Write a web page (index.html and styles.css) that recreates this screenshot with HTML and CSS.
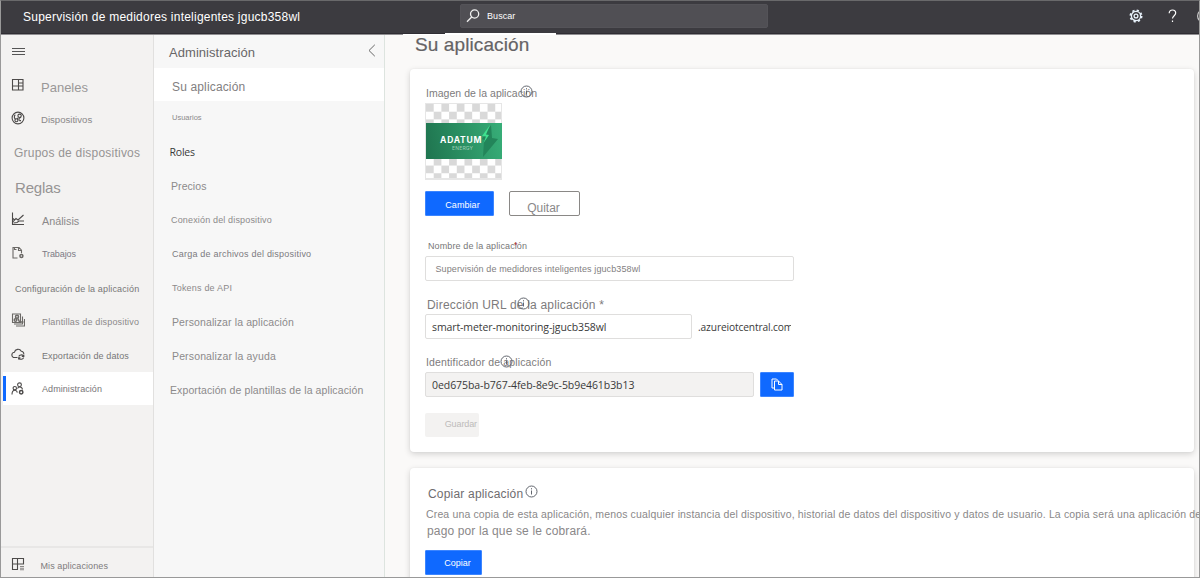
FILE: index.html
```html
<!DOCTYPE html>
<html lang="es">
<head>
<meta charset="utf-8">
<title>Su aplicación</title>
<link rel="stylesheet" href="styles.css">
</head>
<body>
<div class="app">
  <header class="topbar">
    <div class="brand">Supervisión de medidores inteligentes jgucb358wl</div>
    <div class="search">
      <svg class="search-icon" width="14" height="14" viewBox="0 0 14 14"><circle cx="8.6" cy="5" r="4.1"/><path d="M5.7 8 1 12.8"/></svg>
      <span>Buscar</span>
    </div>
    <div class="tools">
      <svg class="gear" width="14" height="14" viewBox="0 0 14 14"><circle cx="7" cy="7" r="5.6" class="teeth"/><circle cx="7" cy="7" r="4.6"/><circle cx="7" cy="7" r="1.9"/></svg>
      <svg class="help" width="9" height="14" viewBox="0 0 9 14"><path d="M1.2 4.2C1.2 2.2 2.5 1 4.5 1s3.2 1.2 3.2 3c0 2.6-3.2 2.8-3.2 5.6M4.5 11.6v1.4"/></svg>
      <svg class="face" width="14" height="14" viewBox="0 0 14 14"><circle cx="7" cy="7" r="6.4"/></svg>
    </div>
  </header>

  <div class="body">
    <nav class="sidebar">
      <div class="burger"><svg width="13" height="8" viewBox="0 0 13 8"><path d="M0 .5h13M0 3.5h13M0 6.5h13"/></svg></div>
      <a class="item"><svg class="ico" viewBox="0 0 14 14"><path d="M1.500 1.500h10.500v10.500h-10.500zM7.500 1.500v10.500M1.500 8h10.500M7.500 5h4.500"/></svg><span class="paneles">Paneles</span></a>
      <a class="item"><svg class="ico" viewBox="0 0 14 14"><circle cx="7" cy="7" r="5.9"/><circle cx="8.6" cy="4.8" r="1.7"/><circle cx="5.4" cy="9.3" r="1.5"/><path d="M7 6.8 6 8.2M10 6.4c-2 .2-2.6 1.4-1.6 3.2M4.2 3.6c-1.400 2-1 4 .4 4.600M8.400 9.600h1.600"/></svg><span class="dispositivos">Dispositivos</span></a>
      <a class="item bare"><span class="grupos">Grupos de dispositivos</span></a>
      <a class="item bare"><span class="reglas">Reglas</span></a>
      <a class="item"><svg class="ico" viewBox="0 0 14 14"><path d="M1.500 .5v12h11.500M2 9.500 5 6.500 7 8 12.500 3M2 6.500 3.500 8M2.500 11 6 10.500 8 9h5"/></svg><span class="analisis">Análisis</span></a>
      <a class="item"><svg class="ico soft" viewBox="0 0 14 14"><path d="M6.500 12H2V1.500h6l2.500 2.700v3M7.500 1.500v3h3M3.500 1.500v2h2"/><circle cx="10.400" cy="10" r="1.500" class="thick"/></svg><span class="trabajos">Trabajos</span></a>
      <a class="item bare"><span class="config">Configuración de la aplicación</span></a>
      <a class="item"><svg class="ico soft" viewBox="0 0 14 14"><path d="M1.500 1h8v8.500h-8zM3 11h8.500V3.500M5 13h8.500V6" /><circle cx="6" cy="3.800" r="1.500" class="thick"/><circle cx="4.500" cy="7" r="1.300" class="thick"/><path d="M7 5.500 8.500 9h4" class="thick"/></svg><span class="plantillas">Plantillas de dispositivo</span></a>
      <a class="item"><svg class="ico" viewBox="0 0 14 14"><path d="M6.500 10.500H3.500A2.600 2.600 0 0 1 3.400 5.300 3.700 3.700 0 0 1 10.300 4.300 2.600 2.600 0 0 1 12.800 7"/><path d="M7.800 9.500a2.500 2 0 0 1 4.600-.6M12.800 7.500V9.500H10.800M12.600 10.500a2.500 2 0 0 1-4.600.8M7.600 12.500v-1.800h1.800"/></svg><span class="exportar">Exportación de datos</span></a>
      <a class="item active"><svg class="ico" viewBox="0 0 14 14"><circle cx="8.500" cy="2.800" r="1.900"/><circle cx="3.800" cy="6.200" r="1.700"/><path d="M1 12.500C1 9.500 2 8.300 3.800 8.300S6 9 6.400 10.500M6.500 6.500c.5-1 1.200-1.500 2.200-1.500 1.500 0 2.600 1 2.800 2.500"/><circle cx="10.200" cy="10.200" r="1.700" class="thick"/></svg><span class="admin">Administración</span></a>
      <div class="foot"><svg class="ico" viewBox="0 0 14 14"><path d="M7 12.500H1.500V1.500h11v6M1.500 7h11M6.500 1.500v11"/><path class="soft-line" d="M9 9.500h4M9 11.200h4M9 12.800h4"/></svg><span class="mis">Mis aplicaciones</span></div>
    </nav>

    <nav class="subnav">
      <div class="subhead"><span>Administración</span><svg width="8" height="13" viewBox="0 0 8 13"><path d="M6.800.8 1 6.500l5.800 5.700"/></svg></div>
      <a class="sub current">Su aplicación</a>
      <a class="sub usuarios">Usuarios</a>
      <a class="sub roles">Roles</a>
      <a class="sub precios">Precios</a>
      <a class="sub conexion">Conexión del dispositivo</a>
      <a class="sub carga">Carga de archivos del dispositivo</a>
      <a class="sub tokens">Tokens de API</a>
      <a class="sub perso">Personalizar la aplicación</a>
      <a class="sub ayuda">Personalizar la ayuda</a>
      <a class="sub expo">Exportación de plantillas de la aplicación</a>
    </nav>

    <main class="content">
      <h1>Su aplicación</h1>
      <section class="card settings">
        <div class="label imagen">Imagen de la aplicación
          <svg class="info" viewBox="0 0 13 13"><circle cx="6.500" cy="6.500" r="5.500"/><path d="M6.500 5.500v4M6.500 3.200v1.200"/></svg>
        </div>
        <div class="thumb"><div class="logo">
          <svg class="bolt" viewBox="0 0 18 34"><path class="b1" d="M10 1 1 15l2 1-1 17L17 15l-6-1z"/><path class="b2" d="M9 1 1 12l4 .5L2.500 19 8 11l-3-.5z"/></svg>
          <span class="name">ADATUM</span><span class="tag">ENERGY</span></div></div>
        <div class="buttons"><button class="primary change">Cambiar</button><button class="outline">Quitar</button></div>
        <div class="label nombre">Nombre de la aplicación<span class="req">*</span></div>
        <div class="field name-field">Supervisión de medidores inteligentes jgucb358wl</div>
        <div class="label url">Dirección URL de la aplicación *
          <svg class="info" viewBox="0 0 13 13"><circle cx="6.500" cy="6.500" r="5.500"/><path d="M6.500 5.500v4M6.500 3.200v1.200"/></svg>
        </div>
        <div class="row"><div class="field url-field">smart-meter-monitoring-jgucb358wl</div><div class="suffix">.azureiotcentral.com</div></div>
        <div class="label ident">Identificador de aplicación
          <svg class="info" viewBox="0 0 13 13"><circle cx="6.500" cy="6.500" r="5.500"/><path d="M6.500 5.500v4M6.500 3.200v1.200"/></svg>
        </div>
        <div class="row"><div class="field id-field">0ed675ba-b767-4feb-8e9c-5b9e461b3b13</div>
          <button class="primary copy-id"><svg width="12" height="13" viewBox="0 0 12 13"><path d="M3.500 10H1V1h4.500l1.500 1.500M3.500 3h4l3.500 3.500V12H3.500zM7.500 3v3.500H11"/></svg></button></div>
        <button class="save">Guardar</button>
      </section>
      <section class="card copy">
        <h2>Copiar aplicación<svg class="info" viewBox="0 0 13 13"><circle cx="6.500" cy="6.500" r="5.500"/><path d="M6.500 5.500v4M6.500 3.200v1.200"/></svg></h2>
        <p class="line1">Crea una copia de esta aplicación, menos cualquier instancia del dispositivo, historial de datos del dispositivo y datos de usuario. La copia será una aplicación de</p>
        <p class="line2">pago por la que se le cobrará.</p>
        <button class="primary duplicate">Copiar</button>
      </section>
    </main>
  </div>
</div>
</body>
</html>
```

FILE: styles.css
```css
* { box-sizing: border-box; }
body { margin: 0; font-family: "Liberation Sans", Arial, sans-serif; color: #7d7b7c; }
svg { fill: none; display: block; flex: none; }
button { font-family: inherit; border: 0; border-radius: 1px; padding: 0; display: block; }

.app { position: relative; width: 1200px; height: 578px; overflow: hidden; display: flex; flex-direction: column; background: #faf9f8; }
.app::after { content: ""; position: absolute; inset: 0; border: 1px solid #999; border-top-color: #69696b; pointer-events: none; }

/* Top bar */
.topbar { height: 35px; flex: none; background: #3c3b40; border-bottom: 1px solid #8f8e91; box-shadow: inset 0 -1px #2f2d33; display: flex; align-items: flex-start; color: #fff; }
.brand { width: 460px; padding-left: 23px; font-size: 12px; letter-spacing: .23px; line-height: 34px; white-space: nowrap; }
.search { width: 308px; height: 24px; margin-top: 4px; background: #504f54; border: 1px solid #545358; border-radius: 2px; display: flex; align-items: center; padding-left: 5px; font-size: 9px; letter-spacing: .07px; gap: 7px; }
.search-icon { stroke: #f0f0f0; stroke-width: 1.3; }
.tools { margin-left: auto; display: flex; align-items: center; height: 31px; margin-right: -11px; stroke: #fff; }
.tools svg { stroke-width: 1.2; }
.tools .gear { stroke: #e8f2fb; margin-right: 25px; stroke-width: 1.3; }
.tools .teeth { stroke-width: 1.8; stroke-dasharray: 2.2 2.2; }
.help { margin-right: 20px; }
.face { stroke: #ccc; }

.body { flex: 1; display: flex; min-height: 0; }

/* Main navigation */
.sidebar { width: 154px; background: #f3f2f1; border-right: 1px solid #e1e0df; display: flex; flex-direction: column; padding-left: 1px; flex: none; }
.burger { height: 35px; padding: 13px 0 0 11px; stroke: #555; }
.item { height: 33.600px; display: flex; align-items: center; padding-left: 10px; white-space: nowrap; color: #8b898a; }
.item span { position: relative; }
.item.bare { padding-left: 13px; }
.ico { width: 14px; height: 14px; stroke: #4c4a49; stroke-width: 1.1; position: relative; top: -2px; }
.ico.soft { stroke: #6b6966; }
.ico .thick { stroke-width: 1.500; }
.soft-line { stroke: #8b8886; }
.item .ico { margin-right: 16px; }
.item.active { background: #fff; height: 33px; border-left: 3px solid #0f69ff; border-image: linear-gradient(#fff 5px, #0f69ff 5px 28px, #fff 28px) 1 / 0 0 0 3px; margin-left: 2px; padding-left: 5px; color: #777577; }
.item.active .ico { top: 0; }
.item .paneles { font-size: 13px; color: #9a9898; padding-top: 2px; }
.item .dispositivos { font-size: 9.600px; padding-bottom: 1px; }
.item .grupos { font-size: 12px; letter-spacing: .22px; color: #969494; padding-bottom: 2px; }
.reglas { font-size: 15px; letter-spacing: -.2px; padding-left: 1px; color: #969494; }
.analisis { font-size: 10.800px; padding-left: 1px; }
.trabajos { font-size: 9px; letter-spacing: -.1px; color: #7c7a85; padding: 0 0 2px 1px; }
.config { font-size: 9px; letter-spacing: .14px; padding: 2px 0 0 1px; color: #777; }
.plantillas { font-size: 9px; letter-spacing: .16px; padding-left: 1px; }
.exportar { font-size: 9px; letter-spacing: .12px; padding-left: 1px; color: #777; }
.admin { font-size: 9px; letter-spacing: .07px; padding-left: 1px; }
.foot { margin-top: auto; height: 32px; border-top: 2px solid #e8e7e6; display: flex; align-items: center; padding: 5px 0 0 10px; }
.mis { font-size: 9px; letter-spacing: .09px; margin-left: 15.500px; }

/* Section navigation */
.subnav { width: 231px; flex: none; background: #f7f7f7; border-right: 1px solid #dde4df; }
.subhead { height: 33px; padding: 1px 8px 0 15px; display: flex; align-items: center; justify-content: space-between; font-size: 13px; letter-spacing: .05px; color: #686668; }
.subhead svg { stroke: #666; position: relative; top: -2px; }
.sub { display: block; height: 34px; line-height: 34px; padding-left: 18px; font-size: 10.500px; white-space: nowrap; color: #8c8a8b; }
.sub.current { height: 33px; line-height: 38px; background: #fff; font-size: 12px; letter-spacing: .15px; color: #828081; }
.sub.usuarios { font-size: 7.500px; }
.sub.roles { font-family: "Open Sans", "Noto Sans", sans-serif; font-size: 10.500px; letter-spacing: -.2px; line-height: 35px; padding-left: 15.500px; color: #3a3a3a; }
.sub.precios { letter-spacing: .07px; padding-left: 17px; }
.sub.conexion { font-size: 9px; letter-spacing: .16px; padding-left: 17px; }
.sub.carga { font-size: 9px; letter-spacing: .22px; color: #7c7a80; }
.sub.tokens { font-size: 9px; letter-spacing: .2px; }
.sub.perso { letter-spacing: .11px; }
.sub.ayuda { letter-spacing: .14px; }
.sub.expo { letter-spacing: .1px; padding-left: 16px; }

/* Page content */
.content { flex: 1; min-width: 0; padding: 0 0 0 25px; white-space: nowrap; }
h1 { position: relative; margin: -2px 0 0 -7px; padding-left: 12px; width: 153px; height: 36px; line-height: 23px; font-size: 19px; font-weight: 400; letter-spacing: .1px; color: #656365; -webkit-text-stroke: .2px #656365; background: linear-gradient(#fff, #fff) 42px 0 / 111px 2px no-repeat, linear-gradient(#fff, #fff) 0 1px / 43px 1px no-repeat; }
.card { width: 784px; background: #fff; border-radius: 4px; box-shadow: 0 2px 6px rgba(0,0,0,.16), 0 0 2px rgba(0,0,0,.06); padding-left: 15px; }
.settings { height: 383px; padding-top: 17px; }
.label { position: relative; height: 16px; line-height: 16px; padding-left: 1px; }
.info { position: absolute; width: 13px; height: 13px; stroke: #62666e; stroke-width: 1; }
.imagen { font-size: 10.500px; line-height: 14px; letter-spacing: .03px; }
.imagen .info { left: 94.500px; top: -1px; }
.thumb { width: 77px; height: 77px; margin-top: 1px; border: 1px solid #e6e6e6; border-bottom-width: 2px; display: flex; align-items: center; background: conic-gradient(#fff 25%, #d9d9d9 0 50%, #fff 0 75%, #d9d9d9 0) 0 0 / 15.400px 15.400px; }
.logo { position: relative; width: 76px; height: 36px; margin-right: -1px; flex: none; background: linear-gradient(80deg, #1f744f, #37ae78); color: #fff; padding: 12px 0 0 14px; }
.bolt { position: absolute; left: 55px; top: 1px; width: 18px; height: 34px; }
.b1 { fill: #23855a; }
.b2 { fill: #3fe08e; }
.name { position: relative; display: block; font: 700 8.500px/11px Inter, sans-serif; letter-spacing: .8px; }
.tag { position: relative; display: block; font: 400 5px/5px Inter, sans-serif; letter-spacing: .2px; padding-left: 12px; color: #9ccdb6; }
.buttons { display: flex; margin-top: 11px; gap: 15px; }
.primary { background: #0f69ff; color: #fff; height: 25px; border: 1px solid #3c85ff; font-size: 9px; }
.change { width: 69px; padding: 2px 0 0 6px; letter-spacing: .07px; }
.outline { width: 71px; height: 25px; border: 1px solid #8a8886; background: #fff; border-radius: 2px; font-size: 12px; color: #8a8889; padding: 8px 2px 0 0; line-height: 16px; }
.nombre { margin-top: 22px; font-size: 9px; letter-spacing: .11px; padding-left: 3px; color: #777; }
.req { position: absolute; left: 89px; top: -1px; color: #a4262c; font-size: 9px; }
.field { height: 25px; border: 1px solid #dfdedd; border-radius: 2px; line-height: 23px; }
.name-field { width: 369px; margin-top: 2px; padding-left: 9.500px; font-size: 9px; letter-spacing: .11px; color: #828081; line-height: 24px; }
.url { margin-top: 16px; font-size: 12px; letter-spacing: .19px; padding-left: 2px; }
.url .info { left: 91.500px; top: 0; }
.row { display: flex; }
.url + .row { margin-top: 1px; }
.url-field, .id-field, .suffix { font-family: "Open Sans", "Noto Sans", sans-serif; font-size: 10.500px; color: #3a3a3a; padding-left: 6px; }
.url-field { width: 267px; letter-spacing: -.1px; line-height: 25px; }
.suffix { width: 99px; overflow: hidden; padding-left: 6px; line-height: 27px; height: 25px; letter-spacing: -.12px; font-size: 10.200px; }
.ident { margin-top: 15px; font-size: 10.500px; letter-spacing: .15px; }
.ident .info { left: 75px; top: 1px; }
.ident + .row { margin-top: 2px; gap: 6px; }
.id-field { width: 329px; background: #f3f2f1; letter-spacing: -.06px; line-height: 25px; }
.copy-id { width: 34px; display: grid; place-items: center; stroke: #fff; }
.save { width: 54px; height: 24px; margin-top: 16px; background: #f3f2f1; color: #bdbbba; font-size: 9px; letter-spacing: -.1px; padding: 0 2px 2px 0; text-align: right; border-radius: 2px; }
.copy { margin-top: 16px; height: 120px; padding-top: 18px; }
h2 { position: relative; margin: 0; font-size: 12px; line-height: 16px; letter-spacing: .19px; font-weight: 400; padding-left: 3px; color: #6f6d6f; }
h2 .info { left: 99.500px; top: -1px; }
p { margin: 0; }
.line1 { position: relative; margin-top: 4px; padding-left: 1px; font-size: 10.500px; line-height: 16px; letter-spacing: .15px; color: #8a8889; }
.line2 { padding-left: 2px; margin-top: 1px; font-size: 12px; line-height: 16px; letter-spacing: .14px; color: #8a8889; }
.duplicate { width: 57px; margin-top: 11px; padding: 1px 0 0 8px; }
```
